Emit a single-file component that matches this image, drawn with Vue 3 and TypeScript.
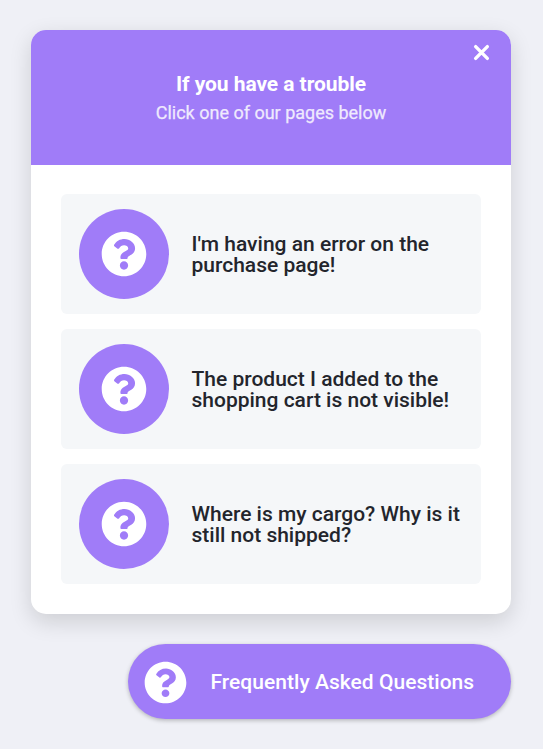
<script setup lang="ts">
interface HelpPage {
  id: number
  title: string
}

const pages: HelpPage[] = [
  { id: 1, title: "I'm having an error on the purchase page!" },
  { id: 2, title: 'The product I added to the shopping cart is not visible!' },
  { id: 3, title: 'Where is my cargo? Why is it still not shipped?' },
]

const questionPath =
  'M504 256c0 136.997-111.043 248-248 248S8 392.997 8 256C8 119.083 119.043 8 256 8s248 111.083 248 248zM262.655 90c-54.497 0-89.255 22.957-116.549 63.758-3.536 5.286-2.353 12.415 2.715 16.258l34.699 26.31c5.205 3.947 12.621 3.008 16.665-2.122 17.864-22.658 30.113-35.797 57.303-35.797 20.429 0 45.698 13.148 45.698 32.958 0 14.976-12.363 22.667-32.534 33.976C247.128 238.528 216 254.941 216 296v4c0 6.627 5.373 12 12 12h56c6.627 0 12-5.373 12-12v-1.333c0-28.462 83.186-29.647 83.186-106.667 0-58.002-60.165-102-116.531-102zM256 338c-25.365 0-46 20.635-46 46 0 25.364 20.635 46 46 46s46-20.636 46-46c0-25.364-20.635-46-46-46z'
</script>

<template>
  <main class="widget">
    <section class="panel">
      <header class="head">
        <button class="close" type="button" aria-label="Close">
          <svg viewBox="0 0 16 16"><path d="M2.5 2.5l11 11M13.5 2.5l-11 11" /></svg>
        </button>
        <h1 class="title">If you have a trouble</h1>
        <p class="subtitle">Click one of our pages below</p>
      </header>
      <div class="list">
        <a v-for="page in pages" :key="page.id" class="item">
          <span class="badge">
            <svg class="badge-icon" viewBox="0 0 512 512"><path :d="questionPath" /></svg>
          </span>
          <span class="label">{{ page.title }}</span>
        </a>
      </div>
    </section>
    <button class="faq" type="button">
      <svg class="faq-icon" viewBox="0 0 512 512"><path :d="questionPath" /></svg>
      <span>Frequently Asked Questions</span>
    </button>
  </main>
</template>

<style>
body {
  background: #eff0f6;
}
</style>

<style scoped>
.widget {
  box-sizing: border-box;
  width: 543px;
  height: 749px;
  padding: 30px 32px 30px 31px;
  display: flex;
  flex-direction: column;
  align-items: flex-end;
  justify-content: space-between;
  background: #eff0f6;
  font-family: Roboto, sans-serif;
}

.panel {
  width: 480px;
  height: 584.4px;
  overflow: hidden;
  border-radius: 15px;
  background: #fff;
  box-shadow: 0 7.5px 22.5px rgba(0, 0, 0, 0.14);
}

.head {
  box-sizing: border-box;
  position: relative;
  height: 135px;
  padding-top: 42px;
  background: #a07cf8;
  color: #fff;
  text-align: center;
}

.close {
  position: absolute;
  top: 14px;
  right: 21px;
  width: 17px;
  height: 17px;
  padding: 0;
  border: 0;
  background: none;
}

.close svg {
  display: block;
  width: 17px;
  height: 17px;
  fill: none;
  stroke: #fff;
  stroke-width: 3.2;
  stroke-linecap: round;
}

.title {
  margin: 0;
  font-size: 21px;
  line-height: 24px;
  font-weight: 700;
  letter-spacing: -0.06px;
}

.subtitle {
  margin: 6px 0 0;
  font-size: 18px;
  line-height: 21px;
  -webkit-text-stroke: 0.25px currentColor;
  opacity: 0.84;
}

.list {
  display: flex;
  flex-direction: column;
  gap: 15px;
  padding: 29px 30px 30px;
}

.item {
  box-sizing: border-box;
  height: 120px;
  padding: 0 18px;
  display: flex;
  align-items: center;
  gap: 22.5px;
  border-radius: 6px;
  background: #f5f7f9;
}

.badge {
  flex: none;
  width: 90px;
  height: 90px;
  display: flex;
  align-items: center;
  justify-content: center;
  border-radius: 50%;
  background: #a07cf8;
}

.badge-icon {
  width: 46px;
  height: 46px;
  fill: #fff;
}

.label {
  padding-top: 2px;
  color: #23252c;
  font-size: 21px;
  line-height: 21px;
  font-weight: 500;
}

.faq {
  box-sizing: border-box;
  width: 383px;
  height: 75px;
  padding: 0 0 0 16px;
  display: flex;
  align-items: center;
  gap: 23.5px;
  border: 0;
  border-radius: 37.5px;
  background: #a07cf8;
  box-shadow: 0 1.5px 4.5px rgba(0, 0, 0, 0.25);
  color: #fff;
  font-family: inherit;
  font-size: 21px;
  font-weight: 500;
  letter-spacing: 0.03px;
}

.faq-icon {
  width: 43px;
  height: 43px;
  margin-top: 1px;
  fill: #fff;
}
</style>
